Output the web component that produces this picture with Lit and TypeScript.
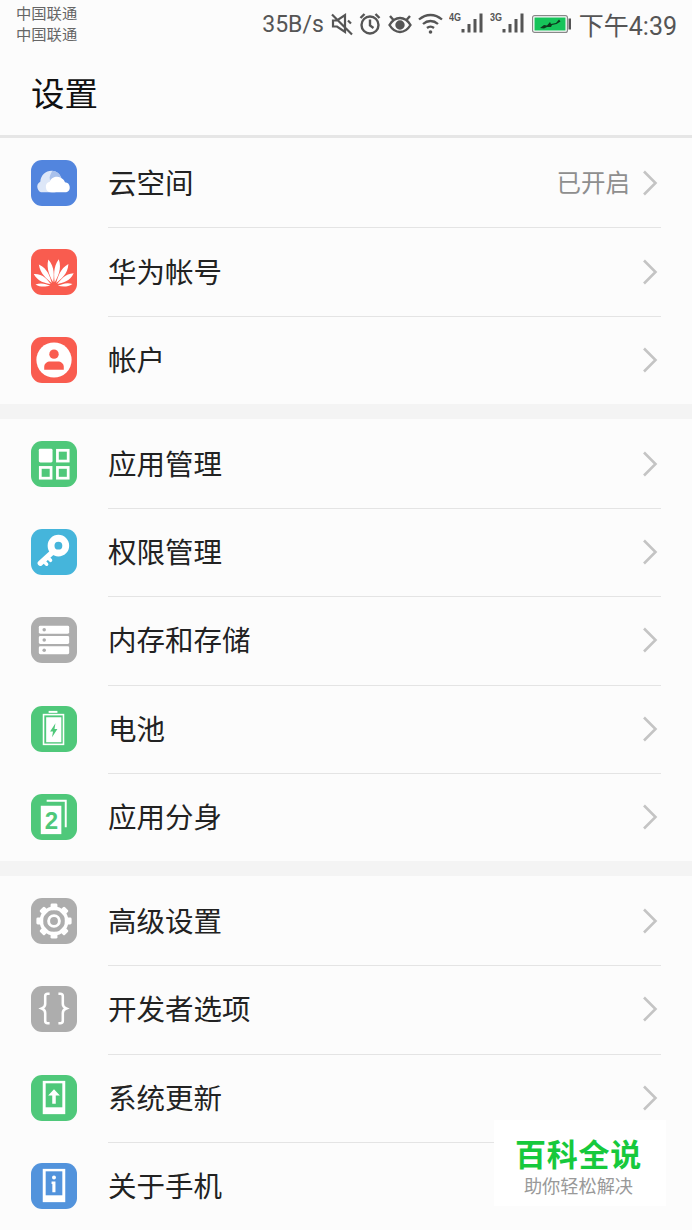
import { LitElement, html, css, svg } from "lit";
import { customElement } from "lit/decorators.js";

const petal = (a: number, len: number, w: number) => {
  const l = (n: number) => (-len * n).toFixed(1);
  return svg`<path transform="translate(23.5 38) rotate(${a}) translate(0 -4)" d="M0 0C${-w * 0.4} ${l(0.25)} ${-w * 1.05} ${l(0.62)} ${-w * 0.1} ${l(1)}C${w * 1.05} ${l(0.62)} ${w * 0.4} ${l(0.25)} 0 0z"/>`;
};

const icons: Record<string, any> = {
  cloud: svg`<path d="M12.5 33a5.800 5.800 0 0 1-3-10.900C10 15.500 15 11 21 11c4.500 0 8.500 3 10 7.500L25 33z" fill="#dde7f8"/>
    <path d="M19 17.500c1-3.500 2.500-5.500 2.500-6.500 4.500 0 8 3 9.500 7.500L24 33h-3z" fill="#a9c1ec"/>
    <path d="M20.500 33a5.500 5.500 0 0 1-1.300-10.800C20.500 18 26 16 30 18c2.400 1.100 4 2.800 4.700 4.700A5.300 5.300 0 0 1 36 33z" fill="#fff"/>`,
  huawei: svg`<g fill="#fff">
    ${[
      [11, 24], [-11, 24], [34, 23], [-34, 23], [58, 20], [-58, 20],
    ].map(([a, l]) => petal(a, l, 4.6))}
    ${[[84, 15], [-84, 15]].map(([a, l]) => petal(a, l, 2.8))}
  </g>`,
  user: svg`<circle cx="23.500" cy="23.500" r="18" fill="#fff"/><circle cx="23.500" cy="17.500" r="4.800" fill="#f95c4f"/><path d="M13.500 33.500v-3c0-3.500 3-5.500 6-5.500h8c3 0 6 2 6 5.500v3z" fill="#f95c4f"/>`,
  apps: svg`<rect x="8" y="8" width="14" height="14" rx="1.500" fill="#fff"/>
    <g fill="none" stroke="#fff" stroke-width="2.800"><rect x="27" y="9.500" width="11" height="11"/><rect x="9.500" y="27" width="11" height="11"/><rect x="27" y="27" width="11" height="11"/></g>`,
  key: svg`<g fill="#fff"><path fill-rule="evenodd" d="M28 6a11 11 0 1 1 0 22 11 11 0 0 1 0-22zm0 7a4 4 0 1 0 0 8 4 4 0 0 0 0-8z"/></g>
    <g fill="none" stroke="#fff" stroke-linecap="round"><path d="M21 24.500L9.500 35" stroke-width="5.500"/><path d="M13 33l3 3M17 29l3 3" stroke-width="3.500"/></g>`,
  storage: svg`<g fill="#fff"><rect x="8" y="9" width="31" height="8" rx="1.500"/><rect x="8" y="19.500" width="31" height="8" rx="1.500"/><rect x="8" y="30" width="31" height="8" rx="1.500"/></g>
    <g fill="#adadad"><circle cx="13.500" cy="13" r="1.800"/><circle cx="13.500" cy="23.500" r="1.800"/><circle cx="13.500" cy="34" r="1.800"/></g>`,
  battery: svg`<rect x="18" y="5" width="9" height="2" fill="#fff"/><rect x="12.800" y="8.800" width="20.400" height="30.400" fill="none" stroke="#fff" stroke-width="1.600"/>
    <rect x="15.500" y="11.500" width="15.500" height="25.500" fill="#fff"/><path d="M25 17.500l-5.500 8.500h3l-1 6 5.500-8.500h-3z" fill="#4fc87a"/>`,
  clone: svg`<path d="M16 7h19.500v27" fill="none" stroke="#fff" stroke-width="2"/><rect x="10" y="12" width="21" height="29" fill="#fff"/>`,
  gear: svg`<g fill="#fff">${[0, 45, 90, 135, 180, 225, 270, 315].map(
    (a) => svg`<rect x="20" y="5.500" width="7" height="7" rx="1.500" transform="rotate(${a} 23.500 23.500)"/>`)}</g>
    <circle cx="23.500" cy="23.500" r="13" fill="none" stroke="#fff" stroke-width="3.500"/><circle cx="23.500" cy="23.500" r="5.500" fill="none" stroke="#fff" stroke-width="3"/>`,
  braces: svg`<path d="M19 8h-2c-1.500 0-2.500 1-2.500 2.500v8c0 2-1 3.500-3.500 4.500 2.500 1 3.500 2.500 3.500 4.500v8c0 1.500 1 2.500 2.500 2.500h2M28 8h2c1.500 0 2.500 1 2.500 2.500v8c0 2 1 3.500 3.500 4.500-2.500 1-3.500 2.500-3.500 4.500v8c0 1.500-1 2.500-2.500 2.500h-2" fill="none" stroke="#fff" stroke-width="2.600"/>`,
  update: svg`<rect x="12" y="6" width="23" height="34" fill="#fff"/><rect x="15" y="8.500" width="17" height="24.500" fill="#4fc87a"/>
    <path d="M23.500 14.500l6 6.500h-4.200v8.500h-3.600V21h-4.200z" fill="#fff"/>`,
  about: svg`<rect x="12" y="6" width="23" height="34" fill="#fff"/><rect x="15" y="8.500" width="17" height="24.500" fill="#5293dc"/>
    <circle cx="23.500" cy="14.800" r="2" fill="#fff"/><path d="M21 19h4v11h-3.200v-8.500H21z" fill="#fff"/>`,
};

const groups = [
  [
    { n: "云空间", i: "cloud", c: "#5285de", v: "已开启" },
    { n: "华为帐号", i: "huawei", c: "#f95c4f" },
    { n: "帐户", i: "user", c: "#f95c4f" },
  ],
  [
    { n: "应用管理", i: "apps", c: "#4fc87a" },
    { n: "权限管理", i: "key", c: "#45b5db" },
    { n: "内存和存储", i: "storage", c: "#adadad" },
    { n: "电池", i: "battery", c: "#4fc87a" },
    { n: "应用分身", i: "clone", c: "#4fc87a", two: true },
  ],
  [
    { n: "高级设置", i: "gear", c: "#adadad" },
    { n: "开发者选项", i: "braces", c: "#adadad" },
    { n: "系统更新", i: "update", c: "#4fc87a" },
    { n: "关于手机", i: "about", c: "#5293dc" },
  ],
];

@customElement("app-root")
export class AppRoot extends LitElement {
  static styles = css`
    :host {
      display: block;
      width: 692px;
      height: 1230px;
      overflow: hidden;
      position: relative;
      background: #fcfcfc;
      font-family: "Noto Sans CJK SC", "Noto Sans", sans-serif;
      color: #1c1c1c;
    }
    .status {
      height: 50px;
      display: flex;
      align-items: center;
      justify-content: space-between;
      padding: 0 15px 2px 16px;
      box-sizing: border-box;
      color: #555;
    }
    .carrier {
      font-size: 15.3px;
      line-height: 21px;
      color: #666;
      margin-top: -2px;
    }
    .sys {
      display: flex;
      align-items: center;
      font-family: Roboto, "Noto Sans CJK SC", sans-serif;
      font-size: 23px;
    }
    .sys svg {
      display: block;
      flex: none;
    }
    .mute { margin-left: 7px; }
    .alarm { margin-left: 6px; }
    .eye { margin-left: 7px; }
    .wifi { margin-left: 6px; }
    .sig4 { margin-left: 6px; }
    .sig3 { margin-left: 7px; }
    .batt { margin-left: 8px; }
    .sys .time {
      font-size: 25px;
      margin-left: 8px;
    }
    .title {
      box-sizing: border-box;
      padding: 17px 0 0 31px;
      font-size: 33.500px;
      line-height: 50px;
      color: #111;
      border-bottom: 3px solid #e6e6e6;
      height: 88px;
      margin-bottom: 1px;
    }
    .group {
      display: flex;
      flex-direction: column;
    }
    .later {
      padding-top: 0.6px;
    }
    .band {
      height: 15px;
      background: #f4f4f4;
    }
    .row {
      height: 88.350px;
      display: flex;
      align-items: center;
      padding-left: 31px;
      gap: 31px;
      flex: none;
    }
    .ic {
      width: 46px;
      height: 46px;
      border-radius: 11px;
      flex: none;
      position: relative;
      display: block;
    }
    .ic svg {
      display: block;
    }
    .two {
      position: absolute;
      left: 10px;
      top: 12px;
      width: 21px;
      height: 29px;
      text-align: center;
      font: bold 24px/29px "Liberation Sans", sans-serif;
      color: #4fc87a;
    }
    .body {
      flex: 1;
      align-self: stretch;
      display: flex;
      align-items: center;
      margin-right: 31px;
      border-bottom: 1px solid #e4e4e4;
      margin-bottom: -1px;
      font-size: 28.500px;
      min-width: 0;
    }
    .row:last-child .body {
      border-bottom-color: transparent;
    }
    .name {
      flex: 1;
      color: #222;
      margin-bottom: 3px;
    }
    .val {
      font-size: 24.500px;
      color: #8e8e8e;
      margin-right: 12px;
      margin-bottom: 3px;
    }
    .chev {
      flex: none;
      margin-right: 3px;
    }
    .mark {
      position: absolute;
      left: 494px;
      top: 1120px;
      width: 172px;
      height: 86px;
      background: #ffffff;
      display: flex;
      flex-direction: column;
      align-items: center;
      box-sizing: border-box;
      padding: 12px 3px 0 0;
    }
    .mark .a {
      font-size: 31px;
      line-height: 41px;
      font-weight: 700;
      color: #16c93c;
      letter-spacing: 0.700px;
      height: 41px;
    }
    .mark .b {
      font-size: 18.200px;
      line-height: 24px;
      color: #999;
    }
  `;

  renderStatus() {
    return html`<div class="status">
      <div class="carrier">中国联通<br />中国联通</div>
      <div class="sys">
        <span>35B/s</span>
        <svg class="mute" width="22" height="26" viewBox="0 0 22 26" fill="none" stroke="#555" stroke-width="2.200"><path d="M2 9.500h4l8-5.500v17l-8-5.500H2zM1 3.500l20 20"/><path d="M17 9.500l3 3"/></svg>
        <svg class="alarm" width="22" height="26" viewBox="0 0 22 26" fill="none" stroke="#555" stroke-width="2.400"><circle cx="11" cy="14" r="8.500"/><path d="M11 8.500v6l3.500 2.500M1.500 7l4-4M20.500 7l-4-4"/></svg>
        <svg class="eye" width="24" height="26" viewBox="0 0 24 26" fill="none" stroke="#555" stroke-width="2.400"><path d="M1.500 14c3-5 7-7 10.500-7s7.500 2 10.500 7c-3 5-7 7-10.500 7s-7.500-2-10.500-7zM2 5l3.500 4M22 5l-3.500 4"/><circle cx="12" cy="14" r="3.500" fill="#555"/></svg>
        <svg class="wifi" width="25" height="26" viewBox="0 0 25 26" fill="none" stroke="#555" stroke-width="2.300"><path d="M1 8.500c7-6 16-6 23 0M5 13c4.500-4 10.500-4 15 0M9 17c2-1.700 5-1.700 7 0"/><circle cx="12.500" cy="21" r="1.800" fill="#555" stroke="none"/></svg>
        ${this.signal("4G", "sig4")} ${this.signal("3G", "sig3")}
        <svg class="batt" width="39" height="22" viewBox="0 0 39 22">
          <rect x="0.600" y="2.600" width="34.800" height="16.800" rx="2" fill="#fff" stroke="#888" stroke-width="1.200"/>
          <rect x="2.500" y="4.500" width="31" height="13" fill="#16c45a"/>
          <path d="M8 15l4-3 3 .5 3-3.500 1 2 5-1 3-3.500 1.500 2-4 2.500-4.500 1-1 2-4 0-3 1.500z" fill="#0e3a1e"/>
          <rect x="36.500" y="5.500" width="2.500" height="11" fill="#555"/>
        </svg>
        <span class="time">下午4:39</span>
      </div>
    </div>`;
  }

  signal(t: string, cls: string) {
    return html`<svg class=${cls} width="34" height="26" viewBox="0 0 34 26">
      <text x="0" y="10" font-family="Liberation Sans" font-weight="700" font-size="10" textLength="12" lengthAdjust="spacingAndGlyphs" fill="#555">${t}</text>
      <g fill="#555"><rect x="12.500" y="18" width="3" height="3.500"/><rect x="18.500" y="13" width="3" height="8.500"/><rect x="24.500" y="8" width="3" height="13.500"/><rect x="30.500" y="2.500" width="3" height="19"/></g>
    </svg>`;
  }

  render() {
    return html`
      ${this.renderStatus()}
      <div class="title">设置</div>
      ${groups.map(
        (g, gi) => html`
          ${gi ? html`<div class="band"></div>` : ""}
          <div class="group ${gi ? "later" : ""}">
            ${g.map(
              (r: any) => html`<div class="row">
                <span class="ic" style="background:${r.c}">
                  <svg width="46" height="46" viewBox="0 0 47 47">${icons[r.i]}</svg>
                  ${r.two ? html`<span class="two">2</span>` : ""}
                </span>
                <div class="body">
                  <span class="name">${r.n}</span>
                  ${r.v ? html`<span class="val">${r.v}</span>` : ""}
                  <svg class="chev" width="16" height="26" viewBox="0 0 16 26" fill="none" stroke="#c4c4c4" stroke-width="2.600"><path d="M2 1.500L13.500 13 2 24.500"/></svg>
                </div>
              </div>`
            )}
          </div>
        `
      )}
      <div class="mark">
        <div class="a">百科全说</div>
        <div class="b">助你轻松解决</div>
      </div>
    `;
  }
}
